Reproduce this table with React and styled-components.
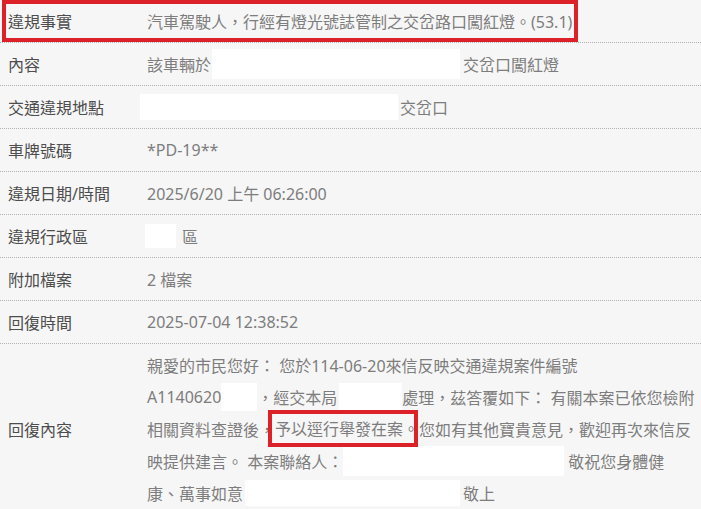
import React from 'react'
import styled, { createGlobalStyle } from 'styled-components'

const GlobalStyle = createGlobalStyle`
  html, body {
    margin: 0;
    padding: 0;
    background: #f6f6f6;
    overflow: hidden;
  }
  body {
    font-family: 'Noto Sans', 'Noto Sans CJK TC', sans-serif;
    font-size: 16px;
  }
`

const Table = styled.div`
  width: 701px;
  background: #f6f6f6;
`

const Row = styled.div`
  position: relative;
  display: flex;
  align-items: center;
  height: ${p => (p.$tall ? 'auto' : '42px')};
  padding: ${p => (p.$tall ? '5px 0' : '0')};
  border-bottom: 1px dotted #b3b3b3;

  ${p => p.$marked && `
    &::after {
      content: "";
      position: absolute;
      left: 2px;
      top: 0;
      width: 576px;
      height: 42px;
      box-sizing: border-box;
      border: 4px solid #dc2128;
    }
  `}
`

const Label = styled.div`
  flex-shrink: 0;
  width: 139px;
  padding-left: 8px;
  color: #4d4d4d;
  white-space: nowrap;
`

const Value = styled.div`
  display: flex;
  align-items: center;
  color: #7d7d7d;
  white-space: nowrap;
`

const Lines = styled.div`
  display: flex;
  flex-direction: column;
  color: #7d7d7d;
`

const Line = styled.div`
  display: flex;
  align-items: center;
  height: 32px;
  white-space: nowrap;
`

const Redact = styled.span`
  display: inline-block;
  flex-shrink: 0;
  background: #fff;
  width: ${p => p.$w}px;
  height: ${p => p.$h || 28}px;
  margin-left: ${p => p.$ml || 0}px;
  margin-right: ${p => p.$mr || 0}px;
`

const Mark = styled.span`
  position: relative;
  display: inline-block;
  line-height: 32px;
  height: 32px;

  &::after {
    content: "";
    position: absolute;
    left: -7px;
    right: 1px;
    top: -3px;
    bottom: -2px;
    border: 4px solid #dc2128;
  }
`

const rows = [
  { label: '車牌號碼', value: '*PD-19**' },
  { label: '違規日期/時間', value: '2025/6/20 上午 06:26:00' },
]

const App = () => {
  return (
    <>
      <GlobalStyle />
      <Table>
        <Row $marked>
          <Label>違規事實</Label>
          <Value>汽車駕駛人，行經有燈光號誌管制之交岔路口闖紅燈。(53.1)</Value>
        </Row>
        <Row>
          <Label>內容</Label>
          <Value>
            該車輛於
            <Redact $w={248} $h={30} $ml={1} $mr={3} />
            交岔口闖紅燈
          </Value>
        </Row>
        <Row>
          <Label>交通違規地點</Label>
          <Value>
            <Redact $w={258} $h={26} $ml={-7} $mr={2} />
            交岔口
          </Value>
        </Row>
        {rows.map(r => (
          <Row key={r.label}>
            <Label>{r.label}</Label>
            <Value>{r.value}</Value>
          </Row>
        ))}
        <Row>
          <Label>違規行政區</Label>
          <Value>
            <Redact $w={31} $h={24} $ml={-2} $mr={6} />
            區
          </Value>
        </Row>
        <Row>
          <Label>附加檔案</Label>
          <Value>2 檔案</Value>
        </Row>
        <Row>
          <Label>回復時間</Label>
          <Value>2025-07-04 12:38:52</Value>
        </Row>
        <Row $tall>
          <Label>回復內容</Label>
          <Lines>
            <Line>親愛的市民您好： 您於114-06-20來信反映交通違規案件編號</Line>
            <Line>
              A1140620
              <Redact $w={36} />
              ，經交本局
              <Redact $w={63} $ml={2} />
              處理，茲答覆如下： 有關本案已依您檢附
            </Line>
            <Line>
              相關資料查證後，
              <Mark>予以逕行舉發在案。</Mark>
              您如有其他寶貴意見，歡迎再次來信反
            </Line>
            <Line>
              映提供建言。 本案聯絡人：
              <Redact $w={221} $h={30} $mr={4} />
              敬祝您身體健
            </Line>
            <Line>
              康、萬事如意
              <Redact $w={215} $h={26} $ml={2} $mr={3} />
              敬上
            </Line>
          </Lines>
        </Row>
      </Table>
    </>
  )
}

export default App
